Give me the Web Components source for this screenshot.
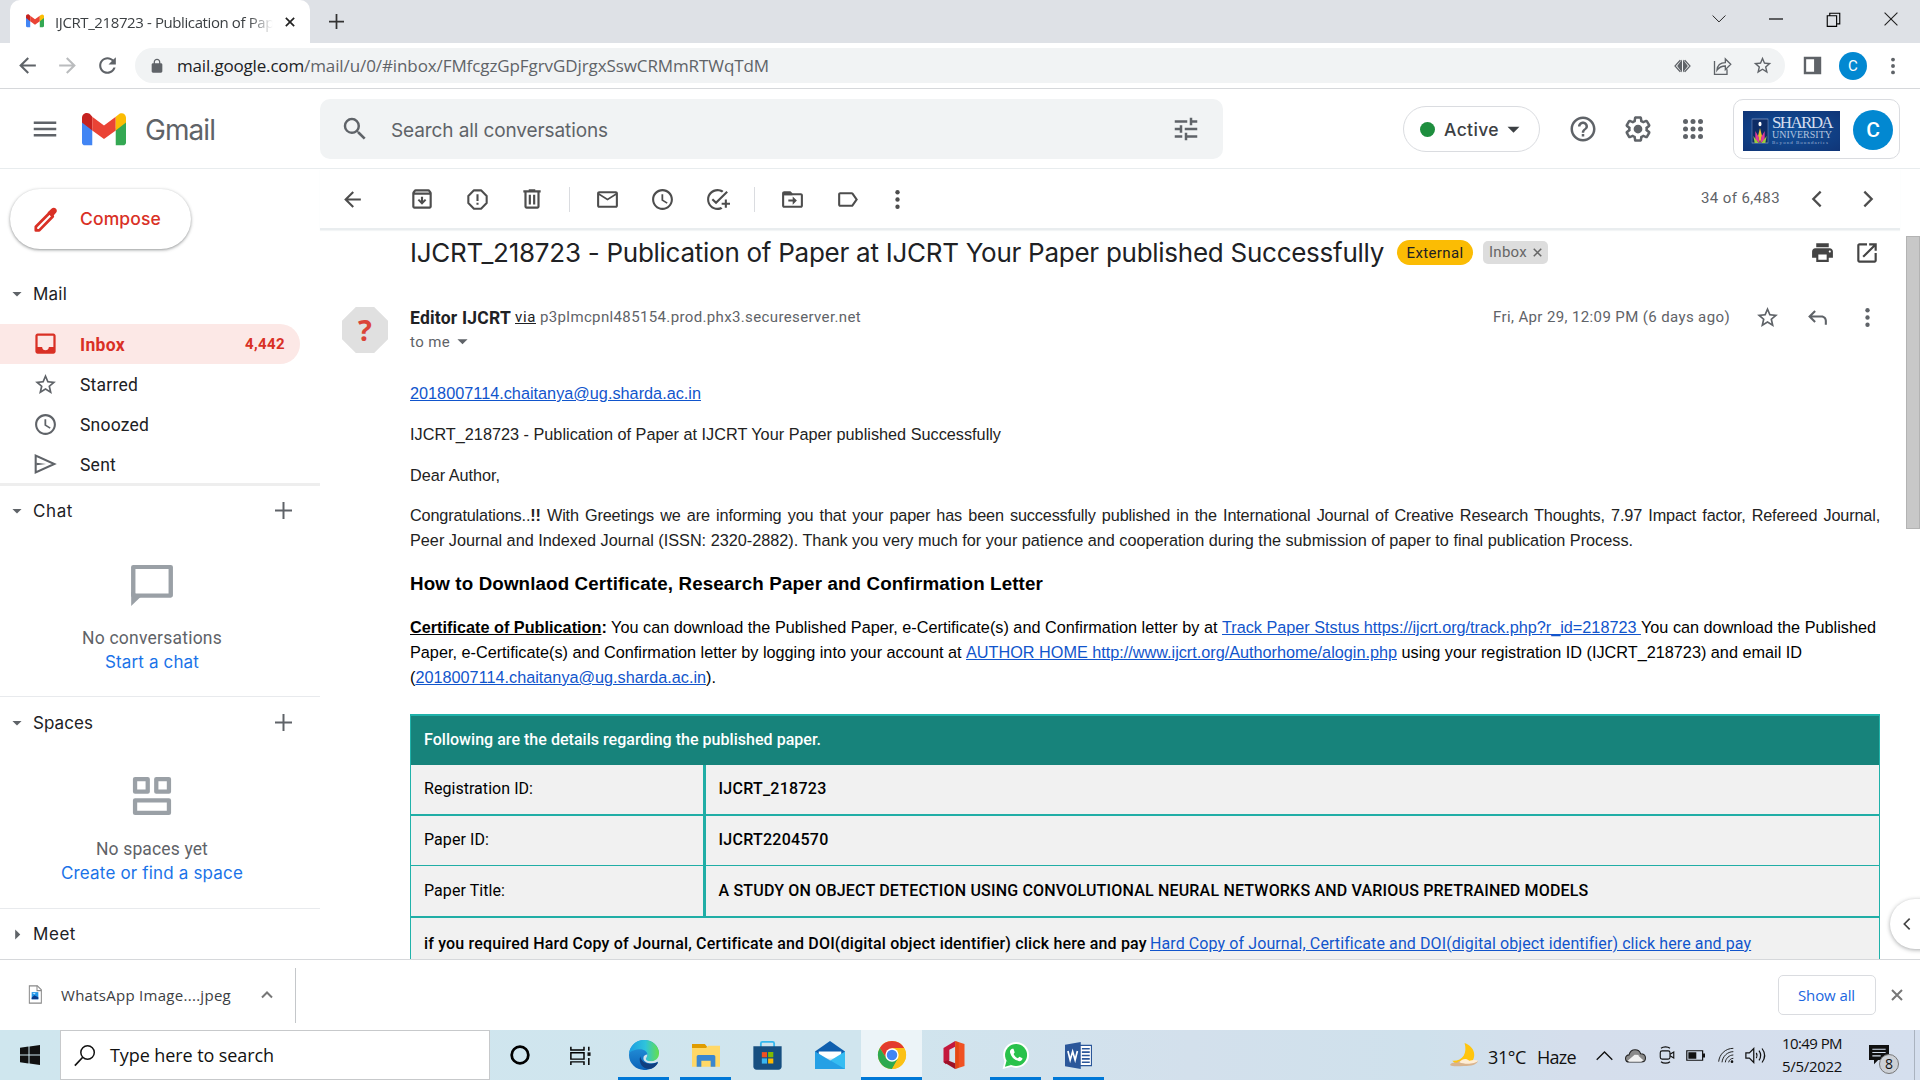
<!DOCTYPE html>
<html lang="en">
<head>
<meta charset="utf-8">
<title>IJCRT_218723 - Publication of Paper</title>
<style>
html,body{margin:0;padding:0;width:1920px;height:1080px;overflow:hidden;background:#fff}
body{font-family:Roboto,"Liberation Sans",sans-serif;color:#202124}
</style>
</head>
<body>
<desktop-view></desktop-view>
<script>
const ICONS = {
menu:'<path d="M3 18h18v-2H3v2zm0-5h18v-2H3v2zm0-7v2h18V6H3z"/>',
search:'<path d="M15.5 14h-.79l-.28-.27A6.471 6.471 0 0 0 16 9.5 6.5 6.5 0 1 0 9.5 16c1.61 0 3.09-.59 4.23-1.57l.27.28v.79l5 4.99L20.49 19l-4.99-5zm-6 0C7.01 14 5 11.99 5 9.5S7.01 5 9.5 5 14 7.01 14 9.5 11.99 14 9.5 14z"/>',
tune:'<path d="M3 17v2h6v-2H3zM3 5v2h10V5H3zm10 16v-2h8v-2h-8v-2h-2v6h2zM7 9v2H3v2h4v2h2V9H7zm14 4v-2H11v2h10zm-6-4h2V7h4V5h-4V3h-2v6z"/>',
help:'<path d="M11 18h2v-2h-2v2zm1-16C6.48 2 2 6.48 2 12s4.48 10 10 10 10-4.48 10-10S17.52 2 12 2zm0 18c-4.41 0-8-3.59-8-8s3.59-8 8-8 8 3.59 8 8-3.59 8-8 8zm0-14c-2.21 0-4 1.79-4 4h2c0-1.1.9-2 2-2s2 .9 2 2c0 2-3 1.75-3 5h2c0-2.25 3-2.5 3-5 0-2.21-1.79-4-4-4z"/>',
gear:'<path d="M13.85 22.25h-3.7c-.74 0-1.36-.54-1.45-1.27l-.27-1.89c-.27-.14-.53-.29-.79-.46l-1.8.72c-.7.26-1.47-.03-1.81-.65L2.2 15.53c-.35-.66-.2-1.44.36-1.88l1.53-1.19c-.01-.15-.02-.3-.02-.46 0-.15.01-.31.02-.46l-1.52-1.19c-.59-.45-.74-1.26-.37-1.88l1.85-3.19c.34-.62 1.11-.9 1.79-.63l1.81.73c.26-.17.52-.32.78-.46l.27-1.91c.09-.7.71-1.25 1.44-1.25h3.7c.74 0 1.36.54 1.45 1.27l.27 1.89c.27.14.53.29.79.46l1.8-.72c.71-.26 1.48.03 1.82.65l1.84 3.18c.36.66.2 1.44-.36 1.88l-1.52 1.19c.01.15.02.3.02.46s-.01.31-.02.46l1.52 1.19c.56.45.72 1.23.37 1.86l-1.86 3.22c-.34.62-1.11.9-1.8.63l-1.8-.72c-.26.17-.52.32-.78.46l-.27 1.91c-.1.68-.72 1.22-1.46 1.22zm-3.23-2h2.76l.37-2.55.53-.22c.44-.18.88-.44 1.34-.78l.45-.34 2.38.96 1.38-2.4-2.03-1.58.07-.56c.03-.26.06-.51.06-.78s-.03-.53-.06-.78l-.07-.56 2.03-1.58-1.39-2.4-2.39.96-.45-.35c-.42-.32-.87-.58-1.33-.77l-.52-.22-.37-2.55h-2.76l-.37 2.55-.53.21c-.44.19-.88.44-1.34.79l-.45.33-2.38-.95-1.39 2.39 2.03 1.58-.07.56a7 7 0 0 0-.06.79c0 .26.02.53.06.78l.07.56-2.03 1.58 1.38 2.4 2.39-.96.45.35c.43.33.86.58 1.33.77l.53.22.38 2.55z"/><circle cx="12" cy="12" r="3.5"/>',
apps:'<g><circle cx="6" cy="6" r="2"/><circle cx="12" cy="6" r="2"/><circle cx="18" cy="6" r="2"/><circle cx="6" cy="12" r="2"/><circle cx="12" cy="12" r="2"/><circle cx="18" cy="12" r="2"/><circle cx="6" cy="18" r="2"/><circle cx="12" cy="18" r="2"/><circle cx="18" cy="18" r="2"/></g>',
back:'<path d="M20 11H7.83l5.59-5.59L12 4l-8 8 8 8 1.41-1.41L7.83 13H20v-2z"/>',
fwd:'<path d="M4 11h12.17l-5.59-5.59L12 4l8 8-8 8-1.41-1.41L16.17 13H4v-2z"/>',
reload:'<path d="M17.65 6.35C16.2 4.9 14.21 4 12 4c-4.42 0-7.99 3.58-7.99 8s3.57 8 7.99 8c3.73 0 6.84-2.55 7.73-6h-2.08c-.82 2.33-3.04 4-5.65 4-3.31 0-6-2.69-6-6s2.69-6 6-6c1.66 0 3.14.69 4.22 1.78L13 11h7V4l-2.35 2.35z"/>',
lock:'<path d="M18 8h-1V6c0-2.76-2.24-5-5-5S7 3.24 7 6v2H6c-1.1 0-2 .9-2 2v10c0 1.1.9 2 2 2h12c1.1 0 2-.9 2-2V10c0-1.1-.9-2-2-2zM8.9 6c0-1.71 1.39-3.1 3.1-3.1s3.1 1.39 3.1 3.1v2H8.9V6z"/>',
archive:'<path d="M20.54 5.23l-1.39-1.68C18.88 3.21 18.47 3 18 3H6c-.47 0-.88.21-1.16.55L3.46 5.23C3.17 5.57 3 6.02 3 6.5V19c0 1.1.9 2 2 2h14c1.1 0 2-.9 2-2V6.5c0-.48-.17-.93-.46-1.27zM6.24 5h11.52l.83 1H5.42l.82-1zM5 19V8h14v11H5z"/><path d="M16 13.2l-4 4-4-4 1.3-1.3 1.7 1.6V10h2v3.500l1.700-1.600z"/>',
spam:'<path fill="none" stroke="currentColor" stroke-width="2" stroke-linejoin="round" d="M8.6 3.2h6.8l5.4 5.400v6.800l-5.400 5.400H8.600l-5.400-5.400V8.600z"/><path d="M11 7h2v6.500h-2zM11 15h2v2h-2z"/>',
trash:'<path d="M15 4V3H9v1H4v2h1v13c0 1.1.9 2 2 2h10c1.1 0 2-.9 2-2V6h1V4h-5zm2 15H7V6h10v13zM9 8h2v9H9zm4 0h2v9h-2z"/>',
mail:'<path d="M20 4H4c-1.1 0-2 .9-2 2v12c0 1.1.9 2 2 2h16c1.1 0 2-.9 2-2V6c0-1.1-.9-2-2-2zm0 14H4V8l8 5 8-5v10zm-8-7L4 6h16l-8 5z"/>',
clock:'<path d="M11.99 2C6.47 2 2 6.48 2 12s4.47 10 9.99 10C17.52 22 22 17.52 22 12S17.52 2 11.99 2zM12 20c-4.42 0-8-3.58-8-8s3.58-8 8-8 8 3.58 8 8-3.58 8-8 8z"/><path d="M12.7 7H11v6l5.1 3.15.85-1.3-4.25-2.6z"/>',
task:'<path d="M22 5.18L10.59 16.6l-4.24-4.24 1.41-1.41 2.83 2.83 10-10L22 5.18zM12 20c-4.41 0-8-3.59-8-8s3.59-8 8-8c1.57 0 3.04.46 4.28 1.25l1.45-1.45C16.1 2.67 14.13 2 12 2 6.48 2 2 6.48 2 12s4.48 10 10 10c1.73 0 3.36-.44 4.78-1.22l-1.5-1.5c-1 .46-2.11.72-3.28.72zm7-5h-3v2h3v3h2v-3h3v-2h-3v-3h-2v3z"/>',
move:'<path d="M20 6h-8l-2-2H4c-1.1 0-2 .9-2 2v12c0 1.1.9 2 2 2h16c1.1 0 2-.9 2-2V8c0-1.1-.9-2-2-2zm0 12H4V8h16v10z"/><path d="M12.2 17l4-4-4-4v3H8v2h4.2zM4 5h6l2 3H4z"/>',
label:'<path d="M17.63 5.84C17.27 5.33 16.67 5 16 5L5 5.01C3.9 5.01 3 5.9 3 7v10c0 1.1.9 1.99 2 1.99L16 19c.67 0 1.27-.33 1.63-.84L22 12l-4.37-6.16zM16 17H5V7h11l3.55 5L16 17z"/>',
more:'<circle cx="12" cy="5" r="2.100"/><circle cx="12" cy="12" r="2.100"/><circle cx="12" cy="19" r="2.100"/>',
left:'<path fill="none" stroke="currentColor" stroke-width="2.5" d="M16 4l-8 8 8 8"/>',
right:'<path fill="none" stroke="currentColor" stroke-width="2.5" d="M8 4l8 8-8 8"/>',
up:'<path fill="none" stroke="currentColor" stroke-width="4" d="M2 17l10-10 10 10"/>',
x:'<path fill="none" stroke="currentColor" stroke-width="4" d="M2 2l20 20M22 2L2 22"/>',
print:'<path d="M19 8H5c-1.66 0-3 1.34-3 3v6h4v4h12v-4h4v-6c0-1.66-1.34-3-3-3zm-3 11H8v-5h8v5zm3-7c-.55 0-1-.45-1-1s.45-1 1-1 1 .45 1 1-.45 1-1 1zm-1-9H6v4h12V3z"/>',
open:'<path d="M19 19H5V5h7V3H5c-1.11 0-2 .9-2 2v14c0 1.1.89 2 2 2h14c1.1 0 2-.9 2-2v-7h-2v7zM14 3v2h3.59l-9.83 9.83 1.41 1.41L19 6.41V10h2V3h-7z"/>',
star:'<path d="M22 9.24l-7.19-.62L12 2 9.19 8.63 2 9.24l5.46 4.73L5.82 21 12 17.27 18.18 21l-1.63-7.03L22 9.24zM12 15.4l-3.76 2.27 1-4.28-3.32-2.88 4.38-.38L12 6.1l1.71 4.04 4.38.38-3.32 2.88 1 4.28L12 15.4z"/>',
reply:'<path d="M19 19v-4c0-1.66-1.34-3-3-3H6.83l3.58 3.59L9 17l-6-6 6-6 1.41 1.41L6.83 10H16c2.76 0 5 2.24 5 5v4z"/>',
inbox:'<path d="M19 3H5c-1.1 0-2 .9-2 2v14c0 1.1.9 2 2 2h14c1.1 0 2-.9 2-2V5c0-1.1-.9-2-2-2zm0 12h-4c0 1.66-1.35 3-3 3s-3-1.34-3-3H5V5h14v10z"/>',
sent:'<path fill="none" stroke="currentColor" stroke-width="1.9" d="M3.4 4.2v15.6L20.6 12z"/><path d="M4 10.8l9 1.2-9 1.2z"/>',
pencil:'<path fill="none" stroke="currentColor" stroke-width="2.300" stroke-linejoin="round" d="M15.500 6.500L4 18v3h2.800L18 9.500z"/><path d="M13.700 6.300l3.200-3.200c1.200-1.200 2.700-1.100 3.600-.2 1.100 1 1.200 2.500.2 3.600L17.600 10z"/>',
plus:'<path fill="none" stroke="currentColor" stroke-width="2.8" d="M12 0v24M0 12h24"/>',
down:'<path d="M1 7h22L12 18z"/>',
tri:'<path d="M7 1v22l11-11z"/>',
bubble:'<path fill="none" stroke="currentColor" stroke-width="2.1" stroke-linejoin="round" d="M3 3h18v14.300H3z"/><path d="M2 15.500V22.500l5-5z"/>',
spaces:'<path fill="none" stroke="currentColor" stroke-width="2.700" stroke-linejoin="round" d="M1.300 1.300h8v8h-8zM14.700 1.300h8v8h-8zM1.300 14.700h21.400v8H1.300z"/>',
share:'<path fill="none" stroke="currentColor" stroke-width="1.600" d="M3 6v16h15v-6M6 17c.5-6 4-9 10-9V3.500l6.500 6.500-6.500 6.500v-4.500c-4 0-7 1-10 5z"/>',
extpair:'<path fill="none" stroke="currentColor" stroke-width="2" d="M9 2l-7.500 10L9 22M15 2l7.500 10L15 22"/><path d="M11.300 1v22L4.500 12zM12.700 1v22l6.800-11z"/>',
panel:'<path d="M1 1h22v22H1zM4 4v16h10V4z" fill-rule="evenodd"/>',
gmail:'<path fill="#4285f4" d="M0 4v13c0 .9.700 1.600 1.600 1.600h4V9z"/><path fill="#34a853" d="M18.400 9v9.600h4c.9 0 1.600-.7 1.600-1.600V4z"/><path fill="#c5221f" d="M0 3.200v2.600l5.600 4.500V2.600L4.200 1C2.500-.2 0 .9 0 3.200z"/><path fill="#ea4335" d="M5.600 2.600L12 7.500l6.400-4.900v7.700L12 15l-6.400-4.700z"/><path fill="#fbbc04" d="M24 3.200v2.600l-5.600 4.500V2.600L19.800 1.500C21.500-.2 24 .9 24 3.200z"/>',
vdown:'<path fill="none" stroke="#222" stroke-width="1.700" d="M1 6l11 11 11-11"/>',
min:'<path stroke="#000" stroke-width="2" d="M0 12h24"/>',
max:'<path fill="none" stroke="#000" stroke-width="1.800" d="M2 6h15v17H2zM6 5V2h16v17h-4"/>',
cls:'<path fill="none" stroke="#222" stroke-width="1.900" d="M1 1l22 22M23 1L1 23"/>',
file:'<path d="M3.500 1h12l6 5v17h-18z" fill="#fff" stroke="#888" stroke-width="1.500"/><path d="M15 1v6h6.500" fill="none" stroke="#888" stroke-width="1.500"/><path d="M7 9h10v9H7z" fill="#2196e8"/><path d="M7 16l4-3 6 2.500V18H7z" fill="#0b3c8c"/><path d="M8 10h5l-2 2z" fill="#bfe6ff"/>',
win:'<path d="M0 3.400l10.200-1.500v9.500H0zM11.400 1.700L24 0v11.400H11.400zM0 12.600h10.200v9.600L0 20.700zM11.400 12.600H24V24l-12.600-1.700z"/>',
lens:'<circle cx="15.500" cy="8.500" r="7.700" fill="none" stroke="#111" stroke-width="1.700"/><path d="M10 14L1 23.500" stroke="#111" stroke-width="1.900"/>',
cortana:'<circle cx="12" cy="12" r="10" fill="none" stroke="#000" stroke-width="3.300"/>',
taskview:'<path fill="none" stroke="#000" stroke-width="1.700" d="M1 1v4h15V1M1 8.500h15v8H1zM1 24v-4h15v4M21.500 1v5M21.500 15v9"/><path d="M20 8h3.500v4.500H20z"/>',
edge:'<defs><linearGradient id="a" x1="0" x2="1"><stop offset="0" stop-color="#1b9de2"/><stop offset=".55" stop-color="#2fc3dc"/><stop offset="1" stop-color="#66e04a"/></linearGradient><linearGradient id="b" x1="0" y1="0" x2="0" y2="1"><stop offset="0" stop-color="#2a9be0"/><stop offset="1" stop-color="#0a62b8"/></linearGradient></defs><path fill="url(#b)" d="M12 0A12 12 0 0 0 12 24c5 0 9-2 11-6 .3-.7-.4-.8-1-.5-2 1-8 1-8-3.500L24 11C24 5 19 0 12 0z"/><path fill="url(#a)" d="M0 10.500C1 4 6 0 12 0c7 0 12 5 12 10.500 0 4-3 6.500-6.500 6.500-3 0-4-1-4-2 0-.8 1.200-1.300 1.200-3.300 0-2.500-2.600-4.400-5.700-4.400-4 0-7.500 1.500-9 3.200z"/><path fill="#103f80" d="M9 13c-2 6 3 11 8.500 10 2-.5 4.500-2.500 5.500-4.500.3-.7-.4-.8-1-.5-5 2.500-12.500.5-13-5z"/><path fill="#d2e5ed" d="M14.700 11.500c0 2-1.200 2.500-1.200 3.500 0 1.200 1.500 2.100 4.500 2.100 2.500 0 4.200-.7 5.500-1.900-.3 1-.7 1.800-1.500 2.600-4 1.800-10.500.6-10.500-3.300 0-2 1.500-3 3.200-3z"/>',
explorer:'<path fill="#e09c00" d="M0 2.500h11l2 2.500v3H0z"/><path fill="#ffd867" d="M0 6h12l2-2h10v18H0z"/><path fill="#3a87d0" d="M4 22v-8.500c0-.8.600-1.500 1.500-1.500h13c.9 0 1.500.700 1.500 1.500V22h-4v-5H8v5z"/>',
store:'<path d="M6.500 5V2c0-.8.500-1.300 1.300-1.300h8.400c.8 0 1.300.5 1.300 1.300v3" fill="none" stroke="#35b8ef" stroke-width="1.500"/><path d="M.3 4.400h23.400V21c0 1.600-1 2.700-2.700 2.700H3C1.300 23.700.3 22.600.3 21z" fill="#174f80"/><path fill="#f25022" d="M7.300 9.200h4.300v4.300H7.300z"/><path fill="#7fba00" d="M12.500 9.200h4.300v4.300h-4.300z"/><path fill="#38b6f0" d="M7.300 14.400h4.300v4.300H7.300z"/><path fill="#ffb900" d="M12.500 14.400h4.300v4.300h-4.300z"/>',
mailapp:'<path fill="#0f5fae" d="M0 9L12 0l12 9v3H0z"/><path fill="#fff" d="M3 9h18v6H3z"/><path fill="#36bdf2" d="M0 9l12 8 12-8v15H0z"/><path fill="#1b8cdc" d="M0 24V9l24 15z" opacity=".6"/>',
chrome:'<circle cx="12" cy="12" r="12" fill="#fbc116"/><path fill="#e33b2e" d="M1.600 6A12 12 0 0 1 22.400 6H12L7 14.500z"/><path fill="#2da94f" d="M1.600 6A12 12 0 0 0 12 24l5-9-10-.5z"/><path fill="#fbc116" d="M12 24a12 12 0 0 0 10.400-18H12l5.500 9z"/><circle cx="12" cy="12" r="5.700" fill="#fff"/><circle cx="12" cy="12" r="4.500" fill="#4285f4"/>',
office:'<path fill="#c4183c" d="M3 6l10-6v5L8 7.500v9L5 20l-2-2z"/><path fill="#f05223" d="M13 0l8 2.500v19L13 24z"/><path fill="#d83b01" d="M13 0l3 1v22l-3 1z" opacity=".5"/><path fill="#9d1227" d="M3 18l3.500-1.500L13 19v5z"/>',
whatsapp:'<circle cx="12.500" cy="11.500" r="11.500" fill="#fff"/><path fill="#fff" d="M.5 24l2-8 6 6z"/><circle cx="12.500" cy="11.500" r="9.800" fill="#29c24b"/><path fill="#29c24b" d="M2.600 22l1.500-5.500 4 4z"/><path fill="#fff" d="M9 6c-1.500.5-2.200 2-1.800 3.500 1 4 4 6.700 8 7.500 1.600.2 3-1 3-2.600L15.500 13l-1.400 1.500c-2-1-3-2-3.800-3.800L11.300 9.300 10.200 6z"/>',
word:'<path fill="#fff" stroke="#2b579a" stroke-width="1" d="M11 3h12.500v18H11z"/><path stroke="#2b579a" stroke-width="1.400" d="M15 6h7M15 9h7M15 12h7M15 15h7M15 18h7"/><path fill="#2b579a" d="M0 2.500L14 0v24L0 21.500z"/><path fill="none" stroke="#fff" stroke-width="1.500" d="M2.600 8l2 8 2.200-7.500L9 16l2-8"/>',
moon:'<path fill="#ffc50d" d="M12.500 0c9 3.500 11 14 4.500 20-5 3-12 1.500-15-3 9 .5 13-7 10.500-17z"/><path fill="#d9b48e" d="M0 21c1-2 4-2.500 6-2 2-3 7-3 9 0 3-1 6 0 9-2-1 4-6 5-12 5-5 0-9 1-12-1z"/><path fill="#ffeed6" d="M8 18.500c3-4 6-4 8.500-1.500 3-1 6-1 7.500 0-2 3-11 4-16 1.500z"/>',
thinup:'<path fill="none" stroke="#111" stroke-width="1.900" d="M1 18L12 7l11 11"/>',
cloud:'<path fill="#8a8a8a" stroke="#222" stroke-width="1.200" d="M5 19.500c-3 0-4.400-2-4.400-4.200 0-2.300 1.900-4 4-4C5.500 8 8 5.500 11.500 5.500c3.300 0 5.600 2 6.300 4.500 3.300 0 5.600 2 5.600 4.900 0 2.600-1.900 4.600-4.700 4.600z"/><path fill="#f1f1f1" d="M3 18l8-7 6 .500-2 .500 6 5.500-2.500 1.500H5z"/>',
meet:'<rect x="3" y="6.500" width="13" height="11" rx="2.500" fill="none" stroke="#111" stroke-width="1.500"/><path fill="none" stroke="#111" stroke-width="1.500" d="M16 11l5-3v8l-5-3M4 3c3-2.500 9-2.500 12 0M4 21c3 2.500 9 2.500 12 0"/>',
battery:'<path fill="none" stroke="#111" stroke-width="1.500" d="M1 6h20v12H1z"/><path d="M3 8h10v8H3zM21.500 9.500H24v5h-2.500z"/>',
wifi:'<path fill="none" stroke="#222" stroke-width="1.500" d="M1 22C2 11 11 2 23 2M6 23C7 14 14 7 23 7M11 23c.5-6 6-11 12-11M16 23c.5-3.500 3.500-6 7-6"/><circle cx="21" cy="22" r="2"/>',
volume:'<path fill="none" stroke="#111" stroke-width="1.400" d="M1 9h4l5-5v16l-5-5H1zM13 9c1 2 1 4 0 6M16 6.500c2.500 3.500 2.500 7.500 0 11M19.500 4c3.700 5 3.700 11 0 16"/>',
note:'<path d="M0 0h24v18H11l-5 5v-5H0z"/><path stroke="#d5dfee" stroke-width="1.300" d="M4 5h16M4 9h16M4 13h10"/>',
sharda:'<rect x="0" y="0" width="24" height="24" fill="#0d2c66" stroke="#8fa3cc" stroke-width=".7"/><circle cx="12" cy="5" r="2.300" fill="#fff"/><path fill="#e6c229" d="M12 9l3 8-3 7-3-7z"/><path fill="#e0399a" d="M5 12l5 6 1 6-6-3zM19 12l-5 6-1 6 6-3z"/><path fill="#9ccc3c" d="M2 17l8 7H4zM22 17l-8 7h6z"/>'
};
/* Inline icon: name, box size, optional height */
customElements.define('ui-icon', class extends HTMLElement{
  connectedCallback(){
    if(this.shadowRoot) return;
    const s=this.getAttribute('s')||25, h=this.getAttribute('h')||s, stretch=this.hasAttribute('h')?'preserveAspectRatio="none"':'';
    this.attachShadow({mode:'open'}).innerHTML=`<style>:host{display:inline-block;width:${s}px;height:${h}px;flex:none;line-height:0}svg{display:block;overflow:visible;fill:currentColor}</style><svg width="${s}" height="${h}" viewBox="0 0 24 24" ${stretch}>${ICONS[this.getAttribute('n')]}</svg>`;
  }
});
/* Single line of text tracked to a given width */
customElements.define('fit-text', class extends HTMLElement{
  connectedCallback(){
    if(!this.shadowRoot) this.attachShadow({mode:'open'}).innerHTML='<style>:host{display:inline-block;white-space:nowrap;flex:none;width:max-content}</style><slot></slot>';
    const w=+this.getAttribute('w'); if(!w) return;
    const n=this.textContent.length, cur=this.getBoundingClientRect().width;
    this.style.letterSpacing=((w-cur)/n).toFixed(3)+'px';
  }
});
/* Row whose items start at the listed columns */
customElements.define('ui-row', class extends HTMLElement{
  connectedCallback(){
    if(this.shadowRoot) return;
    const a=this.getAttribute('at').trim().split(/\s+/).map(Number);
    const c=a.slice(1).map((v,i)=>(v-a[i])+'px').join(' ')+' minmax(0,1fr)';
    this.attachShadow({mode:'open'}).innerHTML=`<style>:host{display:grid;box-sizing:border-box;align-items:center;padding-left:${a[0]}px;grid-template-columns:${c}}::slotted(*){justify-self:start;white-space:nowrap}</style><slot></slot>`;
  }
});
const def=(name,css,html)=>customElements.define(name,class extends HTMLElement{
  connectedCallback(){ if(this.shadowRoot) return;
    this.attachShadow({mode:'open'}).innerHTML=`<style>*{box-sizing:border-box}${css}</style>${html}`; }
});

def('browser-tabs',`:host{display:block;height:43px;background:#dee1e6}
ui-row{height:43px}
.tab{width:300px;height:43px;background:#fff;border-radius:10px 10px 0 0;color:#3c4043;font:15px "Open Sans",sans-serif}
.clip{width:220px;-webkit-mask-image:linear-gradient(90deg,#000 88%,transparent 99%)}`,
`<ui-row at="10 329 1712 1769 1826 1884">
<div class="tab"><ui-row at="16 45 275"><ui-icon n="gmail" s="18" h="17" style="margin-top:1px"></ui-icon><div class="clip"><fit-text w="219">IJCRT_218723 - Publication of Pap</fit-text></div><ui-icon n="x" s="10" style="color:#222"></ui-icon></ui-row></div>
<ui-icon n="plus" s="15" style="color:#333"></ui-icon><ui-icon n="vdown" s="14" style="margin-top:-5px"></ui-icon><ui-icon n="min" s="14" style="margin-top:-5px"></ui-icon><ui-icon n="max" s="15" style="margin-top:-5px"></ui-icon><ui-icon n="cls" s="14" style="margin-top:-5px"></ui-icon></ui-row>`);

def('address-bar',`:host{display:block;height:46px;border-bottom:1px solid #d6d8db;background:#fff;color:#5f6368}
ui-row{height:45px}
.omni{width:1650px;height:35px;border-radius:18px;background:#f1f3f4}
.omni ui-row{height:35px}
.url{font:17px "Open Sans",sans-serif}
b{font-weight:400;color:#202124}
.av{width:28px;height:28px;border-radius:50%;background:#0288d1;color:#fff;display:grid;place-items:center;font:15px Roboto}`,
`<ui-row at="15 55 95 135 1803 1839 1882">
<ui-icon n="back" s="25"></ui-icon><ui-icon n="fwd" s="25" style="color:#babcbe"></ui-icon><ui-icon n="reload" s="25"></ui-icon>
<div class="omni"><ui-row at="14 42 1539 1577 1617"><ui-icon n="lock" s="16"></ui-icon><span class="url"><fit-text w="127"><b>mail.google.com</b></fit-text><fit-text w="465">/mail/u/0/#inbox/FMfcgzGpFgrvGDjrgxSswCRMmRTWqTdM</fit-text></span><ui-icon n="extpair" s="17" h="14"></ui-icon><ui-icon n="share" s="20"></ui-icon><ui-icon n="star" s="21"></ui-icon></ui-row></div>
<ui-icon n="panel" s="19"></ui-icon><div class="av">C</div><ui-icon n="more" s="22"></ui-icon></ui-row>`);

def('mail-header',`:host{display:block;height:80px;border-bottom:1px solid #e8ecee;color:#5f6368}
ui-row{height:80px}
.brand{font:28px "Inter",sans-serif;margin-top:1px}
.search{width:903px;height:60px;border-radius:10px;background:#f1f3f4;font:19px Inter,sans-serif}
.search ui-row{height:60px}
.pill{width:137px;height:46px;border:1px solid #dadce0;border-radius:23px;color:#3c4043;font:500 17.500px Inter,sans-serif}
.pill ui-row{height:44px}
.dot{width:15px;height:15px;border-radius:50%;background:#1e8e3e}
.acct{width:167px;height:60px;border:1px solid #dadce0;border-radius:10px}
.acct ui-row{height:58px}
.logo{width:97px;height:40px;background:radial-gradient(#10509a,#103577);color:#d5deee;font-family:"Liberation Serif",serif;margin-top:3px}
.logo ui-row{height:40px}
.words{display:flex;flex-direction:column;line-height:1;margin-top:-1px}
.words :nth-child(1){font-size:17px;line-height:15px}.words :nth-child(2){font-size:10px;line-height:9px;color:#b5c4de}.words :nth-child(3){font-size:5px;line-height:7px;color:#9fb3d6}
.av{width:40px;height:40px;border-radius:50%;background:#0288d1;color:#fff;display:grid;place-items:center;font:500 21px Roboto;margin-top:2px}`,
`<ui-row at="30 82 145 320 1403 1568 1623 1678 1733">
<ui-icon n="menu" s="30"></ui-icon><ui-icon n="gmail" s="44" h="43" style="margin-top:8px"></ui-icon><fit-text class="brand" w="70">Gmail</fit-text>
<div class="search"><ui-row at="20 71 851"><ui-icon n="search" s="30"></ui-icon><fit-text w="217" style="margin-top:2px">Search all conversations</fit-text><ui-icon n="tune" s="30"></ui-icon></ui-row></div>
<div class="pill"><ui-row at="16 40 103"><span class="dot"></span><fit-text w="55">Active</fit-text><ui-icon n="down" s="13"></ui-icon></ui-row></div>
<ui-icon n="help" s="30"></ui-icon><ui-icon n="gear" s="30"></ui-icon><ui-icon n="apps" s="30"></ui-icon>
<div class="acct"><ui-row at="9 119"><div class="logo"><ui-row at="9 29"><ui-icon n="sharda" s="16" h="24"></ui-icon><div class="words"><fit-text w="60">SHARDA</fit-text><fit-text w="60">UNIVERSITY</fit-text><fit-text w="57">Beyond Boundaries</fit-text></div></ui-row></div><div class="av">C</div></ui-row></div>
</ui-row>`);

def('mail-nav',`:host{display:flex;flex-direction:column;width:320px;height:790px;flex:none;font-size:17.500px;color:#202124}
.compose{margin:20px 0 0 10px;width:181px;height:60px;border-radius:30px;box-shadow:0 1px 3px 1px rgba(60,64,67,.2),0 1px 2px rgba(60,64,67,.3);color:#d93025;font:500 17.500px Inter,sans-serif}
.compose ui-row{height:60px}
.h{font:17px Inter,sans-serif;height:60px}
.r{height:40px;color:#202124}
.r ui-icon,.h ui-icon{color:#5f6368}
.on{width:300px;background:#fce8e6;border-radius:0 20px 20px 0;font-weight:700;color:#d93025}
.on ui-icon{color:#d93025}
.cnt{font-size:15px}
.empty{display:flex;flex-direction:column;align-items:center;width:304px;color:#5f6368}
.empty ui-icon{color:#9aa0a6}
.lnk{color:#1a73e8;font:17px Inter,sans-serif}
.empty fit-text{line-height:24px}
.div{height:1px;background:#e8eaed;flex:none}`,
`<div class="compose"><ui-row at="21 70"><ui-icon n="pencil" s="29"></ui-icon><fit-text w="81" style="margin-top:-1px">Compose</fit-text></ui-row></div>
<ui-row class="h" at="12 33" style="height:50px;margin-top:20px"><ui-icon n="down" s="10"></ui-icon><fit-text w="34">Mail</fit-text></ui-row>
<ui-row class="r on" at="32 80 245" style="margin-top:5px"><ui-icon n="inbox" s="27"></ui-icon><fit-text w="45" style="margin-top:2px">Inbox</fit-text><fit-text class="cnt" w="40">4,442</fit-text></ui-row>
<ui-row class="r" at="33 80"><ui-icon n="star" style="margin-top:1px"></ui-icon><fit-text w="58" style="margin-top:2px">Starred</fit-text></ui-row>
<ui-row class="r" at="33 80"><ui-icon n="clock" style="margin-top:1px"></ui-icon><fit-text w="69" style="margin-top:2px">Snoozed</fit-text></ui-row>
<ui-row class="r" at="32 80" style="height:39px"><ui-icon n="sent" s="26" style="margin-top:2px"></ui-icon><fit-text w="36" style="margin-top:4px">Sent</fit-text></ui-row>
<div class="div" style="height:3px;background:#eee"></div>
<ui-row class="h" at="12 33 275" style="height:50px"><ui-icon n="down" s="10"></ui-icon><fit-text w="40">Chat</fit-text><ui-icon n="plus" s="17"></ui-icon></ui-row>
<div class="empty" style="height:161px;padding-top:25px"><ui-icon n="bubble" s="50" h="48" style="margin-bottom:17px"></ui-icon><fit-text w="140">No conversations</fit-text><fit-text class="lnk" w="94">Start a chat</fit-text></div>
<div class="div"></div>
<ui-row class="h" at="12 33 275" style="height:51px"><ui-icon n="down" s="10"></ui-icon><fit-text w="60">Spaces</fit-text><ui-icon n="plus" s="17"></ui-icon></ui-row>
<div class="empty" style="height:160px;padding-top:29px"><ui-icon n="spaces" s="38" style="margin-bottom:22px"></ui-icon><fit-text w="112">No spaces yet</fit-text><fit-text class="lnk" w="182">Create or find a space</fit-text></div>
<div class="div"></div>
<ui-row class="h" at="12 33" style="height:50px"><ui-icon n="tri" s="11"></ui-icon><fit-text w="43">Meet</fit-text></ui-row>`);

def('thread-toolbar',`:host{display:block;width:1580px;height:61px;border-bottom:2px solid #e9edef;box-shadow:0 1px 1px #f3f5f6;color:#4d4d4d;box-sizing:border-box}
ui-row{height:60px}
.d{width:1px;height:25px;background:#dadce0}
.n{font-size:15px;color:#5f6368;margin-top:-2px}`,
`<ui-row at="20 89 145 199 249 275 330 385 434 460 515 565 1381 1486 1537"><ui-icon n="back"></ui-icon><ui-icon n="archive" s="26"></ui-icon><ui-icon n="spam"></ui-icon><ui-icon n="trash" s="26"></ui-icon><span class="d"></span><ui-icon n="mail"></ui-icon><ui-icon n="clock"></ui-icon><ui-icon n="task"></ui-icon><span class="d"></span><ui-icon n="move"></ui-icon><ui-icon n="label"></ui-icon><ui-icon n="more"></ui-icon><fit-text class="n" w="79">34 of 6,483</fit-text><ui-icon n="left" s="22"></ui-icon><ui-icon n="right" s="22"></ui-icon></ui-row>`);

def('mail-table',`:host{display:flex;flex-direction:column;width:1470px;font:16px Roboto;color:#000;border:1px solid #20b2aa;border-top-width:2px;border-bottom:0;background:#f1f1f1}
.hd{height:49px;background:#17837b;color:#fff;font-weight:500}
.row{display:grid;grid-template-columns:292px 3px 1fr}
.row>i{background:#20aea6}
.row,.row ui-row{height:49px}
b{font-weight:500}
.ln{height:2px;background:#20aea6}
fit-text{margin-top:-2px}
a{color:#15c;text-decoration:underline}`,
`<ui-row class="hd" at="13"><fit-text w="397">Following are the details regarding the published paper.</fit-text></ui-row>
<div class="row"><ui-row at="13"><fit-text w="109">Registration ID:</fit-text></ui-row><i></i><ui-row at="12.500"><fit-text w="108"><b>IJCRT_218723</b></fit-text></ui-row></div><div class="ln"></div>
<div class="row"><ui-row at="13"><fit-text w="65">Paper ID:</fit-text></ui-row><i></i><ui-row at="12.500"><fit-text w="110"><b>IJCRT2204570</b></fit-text></ui-row></div><div class="ln" style="height:1px"></div>
<div class="row" style="height:50px"><ui-row at="13" style="height:50px"><fit-text w="81">Paper Title:</fit-text></ui-row><i></i><ui-row at="12.500" style="height:50px"><fit-text w="870"><b>A STUDY ON OBJECT DETECTION USING CONVOLUTIONAL NEURAL NETWORKS AND VARIOUS PRETRAINED MODELS</b></fit-text></ui-row></div><div class="ln"></div>
<ui-row at="13 739" style="height:53px"><fit-text w="722"><b>if you required Hard Copy of Journal, Certificate and DOI(digital object identifier) click here and pay</b></fit-text><fit-text w="600"><a>Hard Copy of Journal, Certificate and DOI(digital object identifier) click here and pay</a></fit-text></ui-row>`);

def('mail-message',`:host{display:block;height:729px;overflow:hidden;color:#5f6368}
.t{height:45px}.title{font:26px Inter,sans-serif;color:#202124}
.ext{width:76px;height:25px;border-radius:12.500px;background:#fbbc04;color:#202124;font-size:15px}
.ext ui-row{height:26px}
.chip{width:65px;height:23px;border-radius:5px;background:#ddd;color:#666;font-size:15px}
.chip ui-row{height:22px}
.from{height:26px;font-size:15px}
b.s{font:700 17.500px Roboto;color:#202124;margin-top:1px}
u{color:#202124}
.q{width:46px;height:46px;background:#e0e0e0;clip-path:polygon(30% 0,70% 0,100% 30%,100% 70%,70% 100%,30% 100%,0 70%,0 30%);display:grid;place-items:center;color:#db4437;font:700 29px/46px "Open Sans"}
.meta{display:grid;grid-template-columns:22px 68px 1fr;margin-top:29px;height:60px}
.body{margin-left:90px;width:1470px;font:16.250px "Liberation Sans",Arial,sans-serif;color:#222;display:flex;flex-direction:column;align-items:flex-start}
.body>fit-text{line-height:25px}
.blk{color:#000}
a{color:#15c;text-decoration:underline}`,
`<ui-row class="t" at="90 1077 1163 1490 1534"><fit-text class="title" w="974">IJCRT_218723 - Publication of Paper at IJCRT Your Paper published Successfully</fit-text>
<div class="ext"><ui-row at="9.500"><fit-text w="57">External</fit-text></ui-row></div><div class="chip"><ui-row at="6 50"><fit-text w="38">Inbox</fit-text><ui-icon n="x" s="9"></ui-icon></ui-row></div>
<ui-icon n="print" style="color:#444"></ui-icon><ui-icon n="open" s="26" style="color:#444"></ui-icon></ui-row>
<div class="meta"><span></span><div class="q" style="margin-top:3px">?</div><div>
<ui-row class="from" at="0 105 130 1083 1345 1395 1445"><b class="s"><fit-text w="101">Editor IJCRT</fit-text></b><fit-text w="21"><u>via</u></fit-text><fit-text w="321">p3plmcpnl485154.prod.phx3.secureserver.net</fit-text><fit-text w="237">Fri, Apr 29, 12:09 PM (6 days ago)</fit-text><ui-icon n="star"></ui-icon><ui-icon n="reply"></ui-icon><ui-icon n="more"></ui-icon></ui-row>
<ui-row at="0 47" style="height:23px;font-size:15px"><fit-text w="40">to me</fit-text><ui-icon n="down" s="11"></ui-icon></ui-row></div></div>
<div class="body">
<fit-text w="291" style="margin-top:17px"><a>2018007114.chaitanya@ug.sharda.ac.in</a></fit-text>
<fit-text w="591" style="margin-top:16px">IJCRT_218723 - Publication of Paper at IJCRT Your Paper published Successfully</fit-text>
<fit-text w="90" style="margin-top:16px">Dear Author,</fit-text>
<fit-text w="1470" style="margin-top:15px;word-spacing:1.800px">Congratulations..<b>!!</b> With Greetings we are informing you that your paper has been successfully published in the International Journal of Creative Research Thoughts, 7.97 Impact factor, Refereed Journal,</fit-text>
<fit-text w="1223">Peer Journal and Indexed Journal (ISSN: 2320-2882). Thank you very much for your patience and cooperation during the submission of paper to final publication Process.</fit-text>
<fit-text w="633" class="blk" style="margin-top:18px;font-size:18.750px;font-weight:700">How to Downlaod Certificate, Research Paper and Confirmation Letter</fit-text>
<span class="blk" style="margin-top:19px;line-height:25px;white-space:nowrap"><fit-text w="812"><b><u style="color:#000">Certificate of Publication</u>:</b> You can download the Published Paper, e-Certificate(s) and Confirmation letter by at&nbsp;</fit-text><fit-text w="419"><a>Track Paper Ststus https://ijcrt.org/track.php?r_id=218723&nbsp;</a></fit-text><fit-text w="235">You can download the Published</fit-text></span>
<span class="blk" style="line-height:25px;white-space:nowrap"><fit-text w="556">Paper, e-Certificate(s) and Confirmation letter by logging into your account at&nbsp;</fit-text><fit-text w="431"><a>AUTHOR HOME http://www.ijcrt.org/Authorhome/alogin.php</a></fit-text><fit-text w="405">&nbsp;using your registration ID (IJCRT_218723) and email ID</fit-text></span>
<fit-text w="306" class="blk">(<a>2018007114.chaitanya@ug.sharda.ac.in</a>).</fit-text>
<mail-table style="margin-top:24px"></mail-table>
</div>`);

def('mail-client',`:host{display:flex;height:790px;position:relative;overflow:hidden}
.main{width:1586px}
.sb{width:14px;padding-top:67px}
.sb div{height:293px;background:#c8c8c8;border:1px solid #b3b3b3}
.side{position:absolute;left:1890px;top:730px;width:60px;height:50px;border-radius:25px;background:#fff;box-shadow:0 1px 4px rgba(60,64,67,.45);padding:17px 0 0 9px;color:#444}`,
`<mail-nav></mail-nav><div class="main"><thread-toolbar></thread-toolbar><mail-message></mail-message></div><div class="sb"><div></div></div><div class="side"><ui-icon n="left" s="16"></ui-icon></div>`);

def('download-shelf',`:host{display:block;height:71px;border-top:1px solid #d6d8db;color:#3c4043;font:15px "Open Sans",sans-serif;background:#fff;box-sizing:border-box}
ui-row{height:70px}
.d{width:1px;height:55px;background:#c4c7ca}
.b{width:98px;height:40px;border:1px solid #dadce0;border-radius:5px;color:#1a66e0;font-weight:500;margin-top:-1px}
.b ui-row{height:38px}`,
`<ui-row at="27 61 261 295 1778 1891"><ui-icon n="file" s="16" h="19" style="margin-top:-1px"></ui-icon><fit-text w="170">WhatsApp Image....jpeg</fit-text><ui-icon n="up" s="12" style="color:#777"></ui-icon><span class="d"></span><div class="b"><ui-row at="19"><fit-text w="57">Show all</fit-text></ui-row></div><ui-icon n="x" s="12" style="color:#777"></ui-icon></ui-row>`);

def('task-app',`:host{display:flex;width:61px;height:50px;align-items:center;justify-content:center}
:host([run]){background:linear-gradient(#0078d7,#0078d7) 50% 100%/51px 3px no-repeat}
:host([on]){background:linear-gradient(#0078d7,#0078d7) 50% 100%/61px 3px no-repeat,#ecf4f8}`,`<slot></slot>`);

def('task-bar',`:host{display:block;height:50px;background:linear-gradient(90deg,#cfe6ee 0,#d0e5ee 45%,#d3e0ec 62%,#cfe1ec 74%,#d5deec 82%,#d5dfee);color:#111;font:18px "Open Sans",sans-serif}
ui-row{height:50px}
.s{width:430px;height:50px;background:#fff;border:1px solid #c7c9cb}
.s ui-row{height:48px}
.tm{display:flex;flex-direction:column;font-size:15px;line-height:23px}
.nt{position:relative;width:20px;height:20px}
.bd{position:absolute;left:10px;top:9px;width:20px;height:20px;border-radius:50%;background:#ccd0d6;border:1px solid #777;display:grid;place-items:center;font-size:14px;line-height:18px}
.end{width:1px;height:50px;background:#aab3bf}`,
`<ui-row at="20 60 510 570 613 675 737 799 861 923 985 1048 1450 1488 1537 1596 1625 1658 1686 1718 1745 1782 1869 1914">
<ui-icon n="win" s="20"></ui-icon>
<div class="s"><ui-row at="13 49"><ui-icon n="lens" s="21"></ui-icon><fit-text w="164">Type here to search</fit-text></ui-row></div>
<ui-icon n="cortana" s="20"></ui-icon><ui-icon n="taskview" s="21" h="19"></ui-icon>
<task-app run><ui-icon n="edge" s="30"></ui-icon></task-app><task-app run><ui-icon n="explorer" s="28"></ui-icon></task-app><task-app><ui-icon n="store" s="29"></ui-icon></task-app><task-app><ui-icon n="mailapp" s="30" h="28"></ui-icon></task-app><task-app on><ui-icon n="chrome" s="28"></ui-icon></task-app><task-app><ui-icon n="office" s="28"></ui-icon></task-app><task-app run><ui-icon n="whatsapp" s="27"></ui-icon></task-app><task-app run><ui-icon n="word" s="27"></ui-icon></task-app>
<ui-icon n="moon" s="28" h="25"></ui-icon><fit-text w="38" style="margin-top:3px">31°C</fit-text><fit-text w="39" style="margin-top:3px">Haze</fit-text><ui-icon n="thinup" s="17"></ui-icon><ui-icon n="cloud" s="21"></ui-icon><ui-icon n="meet" s="18"></ui-icon><ui-icon n="battery" s="19"></ui-icon><ui-icon n="wifi" s="16"></ui-icon><ui-icon n="volume" s="21"></ui-icon>
<div class="tm"><fit-text w="60">10:49 PM</fit-text><fit-text w="60">5/5/2022</fit-text></div>
<div class="nt"><ui-icon n="note" s="20"></ui-icon><span class="bd">8</span></div><span class="end"></span></ui-row>`);

def('desktop-view',`:host{display:flex;flex-direction:column;width:1920px;height:1080px;overflow:hidden;background:#fff}:host>*{flex:none}`,
`<browser-tabs></browser-tabs><address-bar></address-bar><mail-header></mail-header><mail-client></mail-client><download-shelf></download-shelf><task-bar></task-bar>`);
</script>
</body>
</html>
